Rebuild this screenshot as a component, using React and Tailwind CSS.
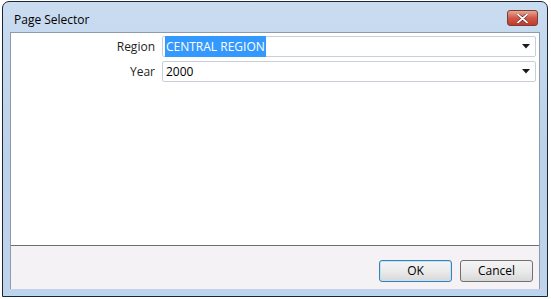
import React from 'react';

const font = { fontFamily: '"Segoe UI", "Open Sans", "Liberation Sans", sans-serif' };

const Caret = () => (
  <svg width="8" height="5" viewBox="0 0 8 5" className="shrink-0">
    <path d="M0 0 H8 L4 4.5 Z" fill="#1a1a1a" />
  </svg>
);

const Combo = ({ value, selected }) => (
  <div className="flex h-[21px] flex-1 items-center rounded-[2px] border border-[#c9cfd8] bg-white pl-[2px] pr-[5px]">
    <div className="flex-1 text-[12px] leading-none text-black">
      {selected ? (
        <span className="bg-[#3399ff] px-[1px] py-[2px] text-white">{value}</span>
      ) : (
        <span className="px-[1px]">{value}</span>
      )}
    </div>
    <Caret />
  </div>
);

const Row = ({ label, children }) => (
  <div className="flex items-center">
    <div className="w-[144px] text-right text-[12px] text-[#1e1e1e]">{label}</div>
    <div className="ml-[7px] flex flex-1">{children}</div>
  </div>
);

const Btn = ({ children, primary }) => (
  <button
    className={`h-[22px] w-[73px] rounded-[3px] border text-[12px] text-black bg-gradient-to-b from-[#f4f4f4] via-[#ebebeb] to-[#d8d8d8] ${
      primary ? 'border-[#3c7fb1] shadow-[inset_0_0_0_1px_#bfe4fa]' : 'border-[#707070]'
    }`}
  >
    {children}
  </button>
);

export default function App() {
  return (
    <div className="h-[299px] w-[551px] bg-white p-[1px] pl-[2px]" style={font}>
      <div className="flex h-[296px] w-[546px] flex-col rounded-t-[7px] border border-[#1c2633] bg-gradient-to-b from-[#c9dcf0] via-[#bcd2ea] to-[#bfd4ec] px-[7px]">
        {/* title bar */}
        <div className="flex h-[30px] items-center justify-between">
          <span className="pl-[4px] pt-[6px] text-[12px] text-black">Page Selector</span>
          <div className="mt-[2px] mr-[2px] flex h-[16px] w-[31px] items-center justify-center rounded-[3px] border border-[#7d3b35] bg-gradient-to-b from-[#e8a593] via-[#d0584a] to-[#c2382a]">
            <svg width="11" height="9" viewBox="0 0 11 9">
              <path d="M1 0.5 L10 8.5 M10 0.5 L1 8.5" stroke="#5a1f19" strokeWidth="3" strokeLinecap="round" />
              <path d="M1 0.5 L10 8.5 M10 0.5 L1 8.5" stroke="#ffffff" strokeWidth="1.8" strokeLinecap="round" />
            </svg>
          </div>
        </div>

        {/* body */}
        <div className="flex flex-1 flex-col border-x border-t border-[#8e9aa8]">
          <div className="flex h-[213px] flex-col gap-[4px] border-b border-[#6f6f6f] bg-white pt-[3px] pr-[3px]">
            <Row label="Region">
              <Combo value="CENTRAL REGION" selected />
            </Row>
            <Row label="Year">
              <Combo value="2000" />
            </Row>
          </div>
          <div className="flex flex-1 items-start justify-end gap-[8px] bg-[#f5f2f5] pt-[14px] pr-[6px]">
            <Btn primary>OK</Btn>
            <Btn>Cancel</Btn>
          </div>
        </div>
        <div className="h-[6px]" />
        <div className="-mx-[7px] h-[1px] bg-[#a8e4f4]" />
      </div>
    </div>
  );
}
